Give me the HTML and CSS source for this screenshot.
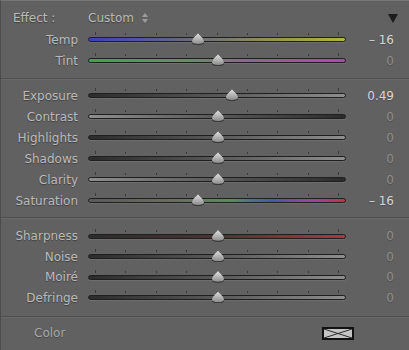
FILE: index.html
```html
<!DOCTYPE html>
<html lang="en">
<head>
    <meta charset="UTF-8">
    <title>Develop - Effect</title>
    <link rel="stylesheet" href="styles.css">
</head>
<body>
    <div class="panel">
        <div class="effect-row">
            <span class="effect-label">Effect :</span>
            <span class="effect-value">Custom</span>
            <svg class="updown" width="6" height="10" viewBox="0 0 6 10">
                <polygon points="0,4 3,0 6,4"/>
                <polygon points="0,6 6,6 3,10"/>
            </svg>
            <svg class="collapse" width="10" height="9" viewBox="0 0 10 9">
                <polygon points="0,0 10,0 5,9"/>
            </svg>
        </div>

        <div class="group">
            <div class="row">
                <span class="label">Temp</span>
                <div class="slider">
                    <div class="ticks"><i class="end"></i><i></i><i></i><i></i><i></i><i></i><i></i><i></i><i class="end"></i></div>
                    <div class="track temp"><span class="thumb" style="left: 103px"></span></div>
                </div>
                <span class="value hi">&ndash; 16</span>
            </div>
            <div class="row">
                <span class="label">Tint</span>
                <div class="slider">
                    <div class="ticks"><i class="end"></i><i></i><i></i><i></i><i></i><i></i><i></i><i></i><i class="end"></i></div>
                    <div class="track tint"><span class="thumb" style="left: 123px"></span></div>
                </div>
                <span class="value">0</span>
            </div>
        </div>

        <div class="sep sep-1"></div>

        <div class="group">
            <div class="row">
                <span class="label">Exposure</span>
                <div class="slider">
                    <div class="ticks"><i class="end"></i><i></i><i></i><i></i><i></i><i></i><i></i><i></i><i class="end"></i></div>
                    <div class="track up"><span class="thumb" style="left: 137px"></span></div>
                </div>
                <span class="value hi">0.49</span>
            </div>
            <div class="row">
                <span class="label">Contrast</span>
                <div class="slider">
                    <div class="ticks"><i class="end"></i><i></i><i></i><i></i><i></i><i></i><i></i><i></i><i class="end"></i></div>
                    <div class="track down"><span class="thumb" style="left: 123px"></span></div>
                </div>
                <span class="value">0</span>
            </div>
            <div class="row">
                <span class="label">Highlights</span>
                <div class="slider">
                    <div class="ticks"><i class="end"></i><i></i><i></i><i></i><i></i><i></i><i></i><i></i><i class="end"></i></div>
                    <div class="track up"><span class="thumb" style="left: 123px"></span></div>
                </div>
                <span class="value">0</span>
            </div>
            <div class="row">
                <span class="label">Shadows</span>
                <div class="slider">
                    <div class="ticks"><i class="end"></i><i></i><i></i><i></i><i></i><i></i><i></i><i></i><i class="end"></i></div>
                    <div class="track up"><span class="thumb" style="left: 123px"></span></div>
                </div>
                <span class="value">0</span>
            </div>
            <div class="row">
                <span class="label">Clarity</span>
                <div class="slider">
                    <div class="ticks"><i class="end"></i><i></i><i></i><i></i><i></i><i></i><i></i><i></i><i class="end"></i></div>
                    <div class="track down"><span class="thumb" style="left: 123px"></span></div>
                </div>
                <span class="value">0</span>
            </div>
            <div class="row">
                <span class="label">Saturation</span>
                <div class="slider">
                    <div class="ticks"><i class="end"></i><i></i><i></i><i></i><i></i><i></i><i></i><i></i><i class="end"></i></div>
                    <div class="track sat"><span class="thumb" style="left: 103px"></span></div>
                </div>
                <span class="value hi">&ndash; 16</span>
            </div>
        </div>

        <div class="sep sep-2"></div>

        <div class="group small">
            <div class="row">
                <span class="label">Sharpness</span>
                <div class="slider">
                    <div class="ticks"><i class="end"></i><i></i><i></i><i></i><i></i><i></i><i></i><i></i><i class="end"></i></div>
                    <div class="track sharp"><span class="thumb" style="left: 123px"></span></div>
                </div>
                <span class="value">0</span>
            </div>
            <div class="row">
                <span class="label">Noise</span>
                <div class="slider">
                    <div class="ticks"><i class="end"></i><i></i><i></i><i></i><i></i><i></i><i></i><i></i><i class="end"></i></div>
                    <div class="track up"><span class="thumb" style="left: 123px"></span></div>
                </div>
                <span class="value">0</span>
            </div>
            <div class="row">
                <span class="label">Moiré</span>
                <div class="slider">
                    <div class="ticks"><i class="end"></i><i></i><i></i><i></i><i></i><i></i><i></i><i></i><i class="end"></i></div>
                    <div class="track up"><span class="thumb" style="left: 123px"></span></div>
                </div>
                <span class="value">0</span>
            </div>
            <div class="row">
                <span class="label">Defringe</span>
                <div class="slider">
                    <div class="ticks"><i class="end"></i><i></i><i></i><i></i><i></i><i></i><i></i><i></i><i class="end"></i></div>
                    <div class="track up"><span class="thumb" style="left: 123px"></span></div>
                </div>
                <span class="value">0</span>
            </div>
        </div>

        <div class="sep sep-3"></div>

        <div class="color-row">
            <span class="color-label">Color</span>
            <svg class="swatch" width="32" height="13" viewBox="0 0 32 13">
                <rect x="1" y="1" width="30" height="11" fill="#c4c4c4" stroke="#111" stroke-width="2"/>
                <line x1="2" y1="2" x2="30" y2="11" stroke="#2a2a2a" stroke-width="1"/>
                <line x1="30" y1="2" x2="2" y2="11" stroke="#2a2a2a" stroke-width="1"/>
            </svg>
        </div>
    </div>
</body>
</html>
```

FILE: styles.css
```css
* { box-sizing: border-box; margin: 0; padding: 0; }
body {
    background-color: #616161;
    font-family: 'DejaVu Sans', 'Liberation Sans', sans-serif;
    font-size: 12px;
}
.panel {
    width: 409px;
    height: 350px;
    background-color: #616161;
    border-top: 1px solid #767676;
    border-left: 1px solid #4c4c4c;
    overflow: hidden;
}

/* header */
.effect-row {
    display: flex; align-items: center;
    height: 28px; padding: 6px 11px 0 12px;
    color: #bababa;
    text-shadow: 0 1px 1px rgba(0, 0, 0, 0.35);
}
.effect-label { width: 75px; }
.effect-value { margin-right: 8px; }
.updown { fill: #9c9c9c; }
.collapse { margin-left: auto; fill: #1c1c1c; }

/* slider rows */
.row {
    display: grid;
    grid-template-columns: 87px 258px 48px;
    align-items: center;
    height: 21px;
}
.group.small .row { height: 20.5px; }
.label {
    text-align: right; padding-right: 10px;
    color: #bababa;
    text-shadow: 0 1px 1px rgba(0, 0, 0, 0.35);
    white-space: nowrap;
}
.value {
    text-align: right;
    color: #8e8e8e;
    text-shadow: 0 1px 1px rgba(0, 0, 0, 0.2);
}
.value.hi { color: #d6d6d6; }

.slider {
    display: flex; flex-direction: column; gap: 2px;
    height: 15px; padding-bottom: 5px;
}
.ticks {
    display: flex; justify-content: space-between; align-items: flex-end;
    height: 3px; padding: 0 7px;
}
.ticks i { display: block; width: 1px; height: 2px; background: #3a3a3a; }
.ticks i.end { height: 3px; }

.track {
    position: relative;
    height: 5px;
    border: 1px solid #1f1f1f;
    border-radius: 3px;
    background: #555555;
    box-shadow: 0 1px 0 rgba(255, 255, 255, 0.08);
}
.track.temp { background: linear-gradient(to right, #3a43b4, #6a6a80 40%, #8a8a5a 65%, #b4b43c); }
.track.tint { background: linear-gradient(to right, #3ca844, #6a8a6a 40%, #8a6a8a 60%, #b444b4); }
.track.up { background: linear-gradient(to right, #2c2c2c, #585858 50%, #8e8e8e); }
.track.down { background: linear-gradient(to right, #8e8e8e, #585858 50%, #2c2c2c); }
.track.sat {
    background: linear-gradient(to right, #5a5a5a, #6a6e62 35%, #5c8a5c 55%, #4858b0 72%, #9a44a8 86%, #c23446);
}
.track.sharp { background: linear-gradient(to right, #2c2c2c, #4a3434 50%, #b03838); }

/* thumb: clipped drop shape, outlined by the filter on its box */
.thumb {
    position: absolute; top: -5px;
    width: 12px; height: 11px;
    filter: drop-shadow(0 0 0.7px #1a1a1a) drop-shadow(0 1px 0.5px rgba(0, 0, 0, 0.4));
}
.thumb::before {
    content: '';
    position: absolute; inset: 0;
    background: linear-gradient(to bottom, #e2e2e2, #b0b0b0 60%, #8c8c8c);
    clip-path: path('M6 0 C7 2 12 5 12 8 C12 10.3 10 11 6 11 C2 11 0 10.3 0 8 C0 5 5 2 6 0 Z');
}

/* separators */
.sep { border-top: 1px solid #4e4e4e; border-bottom: 1px solid #6a6a6a; }
.sep-1 { margin: 7px 0 5px; }
.sep-2 { margin: 6px 0 7px; }
.sep-3 { margin: 8px 0 0; }

/* color */
.color-row {
    display: flex; align-items: center;
    height: 30px; padding-left: 33px;
}
.color-label {
    width: 288px;
    color: #a8a8a8;
    text-shadow: 0 1px 1px rgba(0, 0, 0, 0.3);
}
```
